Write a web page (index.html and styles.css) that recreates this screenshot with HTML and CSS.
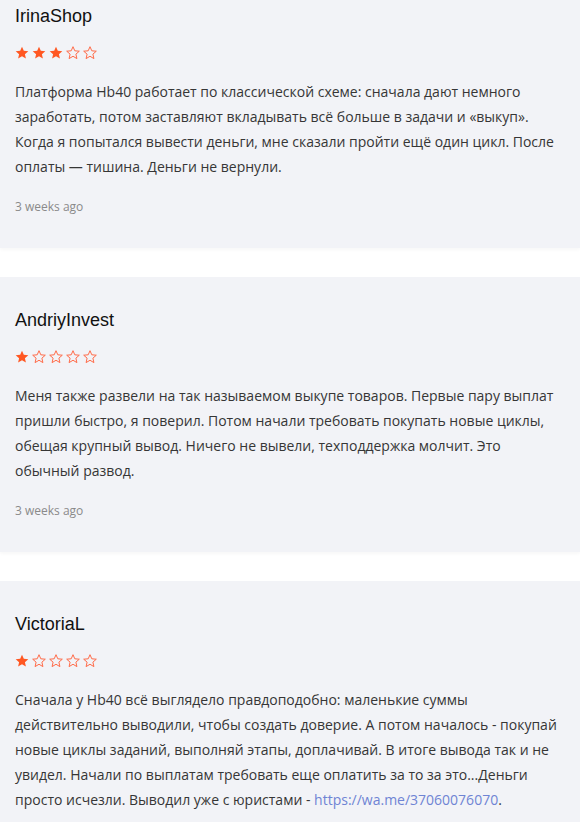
FILE: index.html
```html
<!DOCTYPE html>
<html lang="ru">
<head>
<meta charset="utf-8">
<title>Reviews</title>
<link rel="stylesheet" href="styles.css">
</head>
<body>
<svg width="0" height="0" class="defs" aria-hidden="true">
  <defs>
    <path id="star" d="M7 0.7 L8.8 4.8 L13.3 5.2 L9.9 8.15 L10.9 12.6 L7 10.25 L3.1 12.6 L4.1 8.15 L0.7 5.2 L5.2 4.8 Z"/>
  </defs>
</svg>
<div class="list">
  <article class="review">
    <h3 class="name">IrinaShop</h3>
    <div class="stars">
      <svg class="star full" viewBox="0 0 14 13"><use href="#star"/></svg>
      <svg class="star full" viewBox="0 0 14 13"><use href="#star"/></svg>
      <svg class="star full" viewBox="0 0 14 13"><use href="#star"/></svg>
      <svg class="star empty" viewBox="0 0 14 13"><use href="#star"/></svg>
      <svg class="star empty" viewBox="0 0 14 13"><use href="#star"/></svg>
    </div>
    <p class="text">Платформа Hb40 работает по классической схеме: сначала дают немного заработать, потом заставляют вкладывать всё больше в задачи и «выкуп». Когда я попытался вывести деньги, мне сказали пройти ещё один цикл. После оплаты — тишина. Деньги не вернули.</p>
    <div class="time">3 weeks ago</div>
  </article>
  <article class="review">
    <h3 class="name">AndriyInvest</h3>
    <div class="stars">
      <svg class="star full" viewBox="0 0 14 13"><use href="#star"/></svg>
      <svg class="star empty" viewBox="0 0 14 13"><use href="#star"/></svg>
      <svg class="star empty" viewBox="0 0 14 13"><use href="#star"/></svg>
      <svg class="star empty" viewBox="0 0 14 13"><use href="#star"/></svg>
      <svg class="star empty" viewBox="0 0 14 13"><use href="#star"/></svg>
    </div>
    <p class="text">Меня также развели на так называемом выкупе товаров. Первые пару выплат пришли быстро, я поверил. Потом начали требовать покупать новые циклы, обещая крупный вывод. Ничего не вывели, техподдержка молчит. Это обычный развод.</p>
    <div class="time">3 weeks ago</div>
  </article>
  <article class="review">
    <h3 class="name">VictoriaL</h3>
    <div class="stars">
      <svg class="star full" viewBox="0 0 14 13"><use href="#star"/></svg>
      <svg class="star empty" viewBox="0 0 14 13"><use href="#star"/></svg>
      <svg class="star empty" viewBox="0 0 14 13"><use href="#star"/></svg>
      <svg class="star empty" viewBox="0 0 14 13"><use href="#star"/></svg>
      <svg class="star empty" viewBox="0 0 14 13"><use href="#star"/></svg>
    </div>
    <p class="text">Сначала у Hb40 всё выглядело правдоподобно: маленькие суммы действительно выводили, чтобы создать доверие. А потом началось - покупай новые циклы заданий, выполняй этапы, доплачивай. В итоге вывода так и не увидел. Начали по выплатам требовать еще оплатить за то за это...Деньги просто исчезли. Выводил уже с юристами - <a class="link" href="#">https://wa.me/37060076070</a>.</p>
    <div class="time">3 weeks ago</div>
  </article>
</div>
</body>
</html>
```

FILE: styles.css
```css
html, body {
  margin: 0;
  padding: 0;
  background: #ffffff;
}

.defs {
  position: absolute;
  width: 0;
  height: 0;
}

.list {
  margin-top: -27px;
  display: flex;
  flex-direction: column;
  gap: 29px;
}

.review {
  background: #f2f3f7;
  padding: 32px 15px 33px 15px;
  box-shadow: 0 2px 3px rgba(0, 0, 0, 0.03);
}

.name {
  margin: 0;
  font-family: "Liberation Sans", Arial, sans-serif;
  font-weight: 400;
  font-size: 18px;
  line-height: 22px;
  color: #111111;
}

.stars {
  display: flex;
  gap: 3px;
  margin-top: 19px;
  height: 13px;
}

.star {
  width: 14px;
  height: 13px;
  display: block;
}

.star.full {
  fill: #ff5722;
}

.star.empty {
  fill: none;
  stroke: #ff6a48;
  stroke-width: 1;
}

.text {
  margin: 20px 0 0 0;
  font-family: "Open Sans", "Noto Sans", sans-serif;
  font-size: 14px;
  line-height: 25px;
  color: #363636;
}

.link {
  color: #6f84d4;
  text-decoration: none;
}

.time {
  margin-top: 20px;
  font-family: "Open Sans", "Noto Sans", sans-serif;
  font-size: 12px;
  line-height: 16px;
  color: #8a8a8a;
}
```
